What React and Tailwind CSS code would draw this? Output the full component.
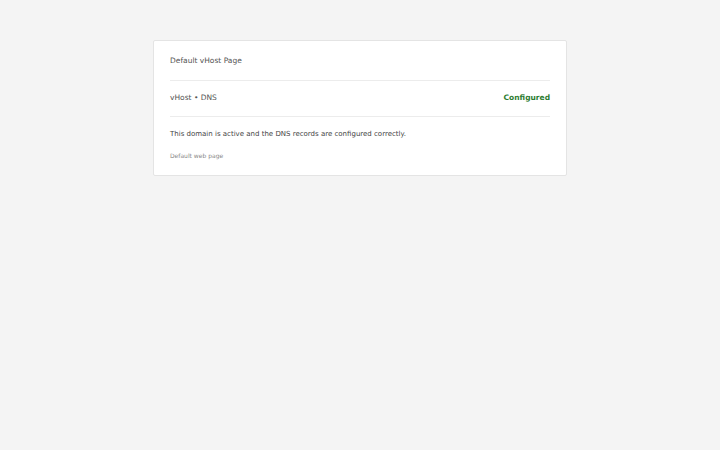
import React from "react";

const App = () => {
  return (
    <div
      className="min-h-screen bg-[#f4f4f4] pt-[40px]"
      style={{ fontFamily: '"DejaVu Sans", sans-serif' }}
    >
      <div className="mx-auto w-[414px] bg-white border border-[#e4e4e4] rounded-[2px] px-4">
        {/* Header */}
        <div className="pt-[15px] pb-[14px] border-b border-[#ececec]">
          <h1 className="text-[7.5px] leading-[10px] text-[#555]">Default vHost Page</h1>
        </div>

        {/* Status row */}
        <div className="flex items-center justify-between pt-[12px] pb-[13px] border-b border-[#ececec]">
          <span className="text-[7.5px] leading-[10px] text-[#555]">vHost • DNS</span>
          <span className="text-[7.5px] leading-[10px] font-bold text-[#2e7d32]">Configured</span>
        </div>

        {/* Body */}
        <div className="pt-[12px] pb-[15px]">
          <p className="text-[7px] leading-[10px] text-[#444]">
            This domain is active and the DNS records are configured correctly.
          </p>
          <p className="mt-[13px] text-[6px] leading-[8px] text-[#888]">Default web page</p>
        </div>
      </div>
    </div>
  );
};

export default App;
